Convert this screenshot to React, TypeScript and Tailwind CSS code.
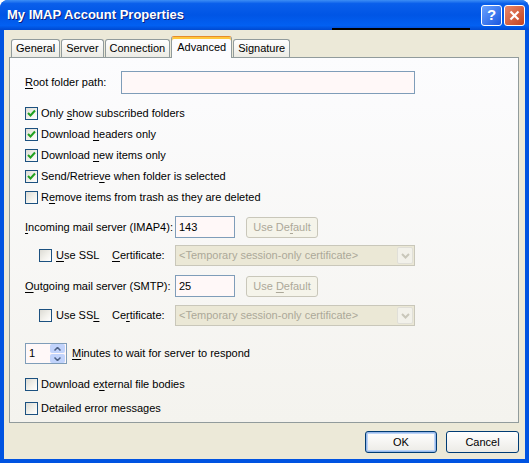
import type { ReactNode } from 'react'

function Check({ checked }: { checked?: boolean }) {
  return (
    <span className="flex h-[13px] w-[13px] shrink-0 items-center justify-center border border-[#1c5180] bg-[linear-gradient(135deg,#dcdbd4_0%,#f4f3ee_60%,#ffffff_100%)]">
      {checked && (
        <svg width="9" height="9" viewBox="0 0 9 9">
          <path d="M1 4 L3.5 6.5 L8 1.5" stroke="#21a121" strokeWidth="2" fill="none" />
        </svg>
      )}
    </span>
  )
}

function CheckRow({ checked, children, className = '' }: { checked?: boolean; children: ReactNode; className?: string }) {
  return (
    <div className={`flex h-[21px] items-center gap-[3px] ${className}`}>
      <Check checked={checked} />
      <span className="whitespace-nowrap">{children}</span>
    </div>
  )
}

function U({ children }: { children: ReactNode }) {
  return <span className="underline underline-offset-2">{children}</span>
}

function TextBox({ value, className = '' }: { value?: string; className?: string }) {
  return (
    <div className={`flex items-center border border-[#7f9db9] bg-[#fff8f8] px-[3px] ${className}`}>{value}</div>
  )
}

function DisabledButton({ children }: { children: ReactNode }) {
  return (
    <div className="ml-[11px] flex h-[21px] w-[72px] items-center justify-center rounded-[3px] border border-[#c9c7ba] bg-[#f5f4ea] text-[#aca899]">
      <span className="whitespace-nowrap">{children}</span>
    </div>
  )
}

function Combo() {
  return (
    <div className="flex h-[21px] w-[240px] items-center border border-[#c9c7ba] bg-[#ebe8d6] pl-[3px] pr-[1px] text-[#aca899]">
      <span className="flex-1 whitespace-nowrap">&lt;Temporary session-only certificate&gt;</span>
      <span className="flex h-[17px] w-[16px] items-center justify-center rounded-[2px] border border-[#e0dfd8] bg-[#f2f1ea]">
        <svg width="9" height="6" viewBox="0 0 9 6">
          <path d="M1 1 L4.5 4.5 L8 1" stroke="#c9c7ba" strokeWidth="2" fill="none" />
        </svg>
      </span>
    </div>
  )
}

function SslRow({ children, cert }: { children: ReactNode; cert: ReactNode }) {
  return (
    <div className="flex h-[21px] items-center">
      <div className="ml-[14px] flex w-[73px] items-center gap-[4px]">
        <Check />
        <span className="whitespace-nowrap">{children}</span>
      </div>
      <span className="w-[63px] whitespace-nowrap">{cert}</span>
      <Combo />
    </div>
  )
}

function Tab({ label, active }: { label: string; active?: boolean }) {
  if (active) {
    return (
      <div className="relative z-10 -mb-px flex h-[22px] items-center rounded-t-[3px] border border-b-0 border-[#919b9c] border-t-[#e68b2c] bg-[#fcfcfe] px-[5px] shadow-[inset_0_2px_0_#ffc73c]">
        {label}
      </div>
    )
  }
  return (
    <div className="mt-[3px] flex h-[18px] items-center rounded-t-[3px] border border-b-0 border-[#919b9c] bg-[linear-gradient(to_bottom,#ffffff,#ecebe5)] px-[4px]">
      {label}
    </div>
  )
}

export default function App() {
  return (
    <div className="relative flex h-[463px] w-[529px] flex-col overflow-hidden rounded-t-[8px] bg-[#0053e1] font-['Liberation_Sans',Tahoma,sans-serif] text-[11px] text-black">
      <div className="flex h-[30px] shrink-0 items-center bg-[linear-gradient(to_bottom,#3d8ef5_0%,#0a5feb_12%,#0055e5_50%,#0260f2_85%,#0049d0_100%)] pl-[7px] pr-[4px]">
        <span className="flex-1 text-[13px] font-bold text-white [text-shadow:1px_1px_#0a1e7d]">My IMAP Account Properties</span>
        <div className="flex gap-[2px]">
          <div className="flex h-[21px] w-[21px] items-center justify-center rounded-[3px] border border-white bg-[linear-gradient(135deg,#6aa2ff,#1957e0)] text-[15px] font-bold text-white">
            ?
          </div>
          <div className="flex h-[21px] w-[21px] items-center justify-center rounded-[3px] border border-white bg-[linear-gradient(135deg,#e9876a,#c4431f)]">
            <svg width="11" height="11" viewBox="0 0 11 11">
              <path d="M1.5 1.5 L9.5 9.5 M9.5 1.5 L1.5 9.5" stroke="white" strokeWidth="2.2" />
            </svg>
          </div>
        </div>
      </div>
      <div className="absolute left-[332px] top-[28px] h-[2px] w-[138px] bg-black" />

      <div className="mx-[4px] mb-[4px] flex flex-1 flex-col bg-[#ece9d8]">
        <div className="ml-[7px] mt-[6px] flex items-end gap-[1px]">
          <Tab label="General" />
          <Tab label="Server" />
          <Tab label="Connection" />
          <Tab label="Advanced" active />
          <Tab label="Signature" />
        </div>

        <div className="ml-[5px] flex w-[510px] flex-col border border-[#919b9c] bg-[linear-gradient(to_bottom,#fcfcfe,#f4f3ee)] pb-[3px] pl-[15px] pt-[13px]">
          <div className="flex h-[23px] items-center">
            <span className="w-[96px]">
              <U>R</U>oot folder path:
            </span>
            <TextBox className="h-[23px] w-[294px]" />
          </div>

          <div className="mt-[9px] flex flex-col">
            <CheckRow checked>
              Only <U>s</U>how subscribed folders
            </CheckRow>
            <CheckRow checked>
              Download <U>h</U>eaders only
            </CheckRow>
            <CheckRow checked>
              Download <U>n</U>ew items only
            </CheckRow>
            <CheckRow checked>
              Send/Retrie<U>v</U>e when folder is selected
            </CheckRow>
            <CheckRow>
              R<U>e</U>move items from trash as they are deleted
            </CheckRow>
          </div>

          <div className="mt-[8px] flex h-[22px] items-center">
            <span className="w-[150px] whitespace-nowrap">
              <U>I</U>ncoming mail server (IMAP4):
            </span>
            <TextBox value="143" className="h-[22px] w-[60px]" />
            <DisabledButton>
              Use De<U>f</U>ault
            </DisabledButton>
          </div>
          <div className="mt-[7px]">
            <SslRow cert={<><U>C</U>ertificate:</>}>
              <U>U</U>se SSL
            </SslRow>
          </div>

          <div className="mt-[9px] flex h-[22px] items-center">
            <span className="w-[150px] whitespace-nowrap">
              <U>O</U>utgoing mail server (SMTP):
            </span>
            <TextBox value="25" className="h-[22px] w-[60px]" />
            <DisabledButton>
              Use <U>D</U>efault
            </DisabledButton>
          </div>
          <div className="mt-[8px]">
            <SslRow cert={<>Ce<U>r</U>tificate:</>}>
              Use SS<U>L</U>
            </SslRow>
          </div>

          <div className="mt-[17px] flex h-[21px] items-center">
            <div className="flex h-[21px] w-[42px] items-center border border-[#7f9db9] bg-[#fff8f8] pl-[3px] pr-[1px]">
              <span className="flex-1">1</span>
              <div className="flex flex-col gap-[1px]">
                <span className="flex h-[9px] w-[15px] items-center justify-center rounded-[2px] bg-[#c1d3fb]">
                  <svg width="7" height="4" viewBox="0 0 7 4">
                    <path d="M0.5 3.5 L3.5 0.5 L6.5 3.5" stroke="#4d6185" strokeWidth="1.5" fill="none" />
                  </svg>
                </span>
                <span className="flex h-[9px] w-[15px] items-center justify-center rounded-[2px] bg-[#c1d3fb]">
                  <svg width="7" height="4" viewBox="0 0 7 4">
                    <path d="M0.5 0.5 L3.5 3.5 L6.5 0.5" stroke="#4d6185" strokeWidth="1.5" fill="none" />
                  </svg>
                </span>
              </div>
            </div>
            <span className="ml-[5px] whitespace-nowrap">
              <U>M</U>inutes to wait for server to respond
            </span>
          </div>

          <CheckRow className="mt-[10px]">
            Download e<U>x</U>ternal file bodies
          </CheckRow>
          <CheckRow className="mt-[3px]">Detailed error messages</CheckRow>
        </div>

        <div className="mr-[6px] mt-[8px] flex justify-end gap-[9px]">
          <div className="flex h-[22px] w-[72px] items-center justify-center rounded-[3px] border border-[#003c74] bg-[linear-gradient(to_bottom,#ffffff,#ecebe6)] shadow-[inset_0_0_0_1px_#98b8ea,inset_0_0_0_2px_#bcd4f6]">
            OK
          </div>
          <div className="flex h-[22px] w-[73px] items-center justify-center rounded-[3px] border border-[#003c74] bg-[linear-gradient(to_bottom,#ffffff,#ecebe6)]">
            Cancel
          </div>
        </div>
      </div>
    </div>
  )
}
